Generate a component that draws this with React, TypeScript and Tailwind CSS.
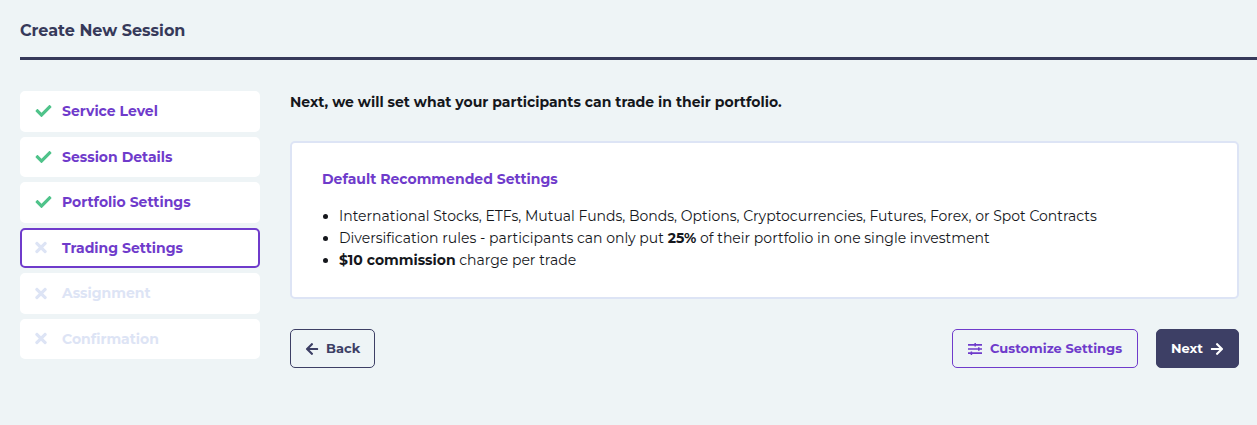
import { FaArrowLeft, FaArrowRight, FaCheck, FaTimes } from "react-icons/fa";

type StepState = "done" | "current" | "upcoming";

const steps: { label: string; state: StepState }[] = [
  { label: "Service Level", state: "done" },
  { label: "Session Details", state: "done" },
  { label: "Portfolio Settings", state: "done" },
  { label: "Trading Settings", state: "current" },
  { label: "Assignment", state: "upcoming" },
  { label: "Confirmation", state: "upcoming" },
];

const stepStyles: Record<StepState, string> = {
  done: "border-white text-[#6f3bcb]",
  current: "border-[#6f3bcb] text-[#6f3bcb]",
  upcoming: "border-white text-[#dde4f5]",
};

function SlidersIcon() {
  return (
    <svg width="14" height="12" viewBox="0 0 14 12" fill="none" stroke="currentColor" aria-hidden="true">
      <path strokeWidth="1.7" d="M0 1.8h14M0 6h14M0 10.2h14" />
      <path strokeWidth="1.5" d="M7.2 0v3.6M10.8 4.2v3.6M3.4 8.4v3.6" />
    </svg>
  );
}

function Step({ label, state }: { label: string; state: StepState }) {
  return (
    <li className="grid">
      <a
        href="#"
        aria-current={state === "current" ? "step" : undefined}
        className={`flex items-center rounded-[5px] border-2 bg-white px-[13px] text-sm font-bold ${stepStyles[state]}`}
      >
        <span className="w-[27px] shrink-0">
          {state === "done" ? (
            <FaCheck className="h-4 w-[17px] text-[#4fc38a]" />
          ) : (
            <FaTimes className="h-[17px] w-3 text-[#dde4f5]" />
          )}
        </span>
        {label}
      </a>
    </li>
  );
}

export default function App() {
  return (
    <div className="min-h-screen bg-[#eef4f6] pb-8 pl-5 font-['Montserrat','Inter',sans-serif] text-[#15171c]">
      <header className="border-b-3 border-[#36395a] pt-[19px] pb-[14px]">
        <h1 className="text-base leading-6 font-bold text-[#36395a]">Create New Session</h1>
      </header>

      <div className="flex items-start gap-[30px] pt-[31px] pr-[18px]">
        <nav aria-label="Session steps" className="w-60 shrink-0">
          <ol className="grid min-h-[268px] auto-rows-fr gap-[5px]">
            {steps.map((step) => (
              <Step key={step.label} label={step.label} state={step.state} />
            ))}
          </ol>
        </nav>

        <main className="min-w-0 flex-1">
          <p className="text-sm leading-[22px] font-bold">
            Next, we will set what your participants can trade in their portfolio.
          </p>

          <section className="mt-7 rounded-[5px] border-2 border-[#dde4f5] bg-white px-[30px] pt-[25px] pb-[26px]">
            <h2 className="text-sm leading-[22px] font-bold text-[#6f3bcb]">Default Recommended Settings</h2>
            <ul className="mt-[15px] list-disc pl-[17px] text-sm leading-[22px]">
              <li>
                International Stocks, ETFs, Mutual Funds, Bonds, Options, Cryptocurrencies, Futures, Forex, or Spot
                Contracts
              </li>
              <li>
                Diversification rules - participants can only put <strong>25%</strong> of their portfolio in one single
                investment
              </li>
              <li>
                <strong>$10 commission</strong> charge per trade
              </li>
            </ul>
          </section>

          <div className="mt-[30px] flex items-center gap-[18px]">
            <button
              type="button"
              className="mr-auto flex h-[39px] items-center gap-[7px] rounded-[5px] border border-[#3d3f65] px-[14px] text-[13px] font-bold text-[#3d3f65]"
            >
              <FaArrowLeft className="size-[14px]" />
              Back
            </button>
            <button
              type="button"
              className="flex h-[39px] items-center gap-2 rounded-[5px] border border-[#6f3bcb] px-[15px] text-[13px] font-bold text-[#6f3bcb]"
            >
              <SlidersIcon />
              Customize Settings
            </button>
            <button
              type="button"
              className="flex h-[39px] items-center gap-[7px] rounded-[5px] border border-[#3d3f65] bg-[#3d3f65] px-[14px] text-[13px] font-bold text-white"
            >
              Next
              <FaArrowRight className="size-[14px]" />
            </button>
          </div>
        </main>
      </div>
    </div>
  );
}
